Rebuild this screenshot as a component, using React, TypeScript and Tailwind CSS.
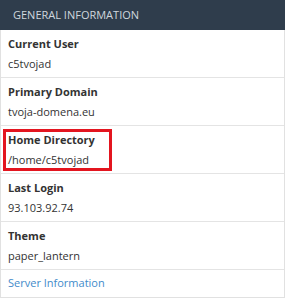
import React from 'react';

const ROWS = [
  { label: 'Current User', value: 'c5tvojad' },
  { label: 'Primary Domain', value: 'tvoja-domena.eu' },
  { label: 'Home Directory', value: '/home/c5tvojad', marked: true },
  { label: 'Last Login', value: '93.103.92.74' },
  { label: 'Theme', value: 'paper_lantern' },
];

export default function App() {
  return (
    <div className="w-[285px] h-[300px] bg-white font-['Open_Sans',sans-serif] text-[11px] text-[#333]">
      {/* Panel header */}
      <div className="h-[30px] bg-[#2f3d4c] flex items-center pl-[13px] text-[11px] text-[#d0d7de] uppercase">
        General Information
      </div>

      <div className="border border-t-0 border-[#e1e1e1]">
        {ROWS.map((row) => (
          <div key={row.label} className="h-[48px] border-b border-[#e4e4e4] pl-[2px] pt-[3px]">
            <div
              className={`w-[109px] flex flex-col pl-[2px] border-[3px] ${
                row.marked ? 'border-[#e3151f]' : 'border-transparent'
              }`}
            >
              <span className="font-bold leading-[16px]">{row.label}</span>
              <span className="leading-[16px] mt-[4px]">{row.value}</span>
            </div>
          </div>
        ))}

        {/* Footer link */}
        <div className="h-[27px] flex items-center pl-[7px]">
          <a href="#" className="text-[#428bca]">Server Information</a>
        </div>
      </div>
    </div>
  );
}
